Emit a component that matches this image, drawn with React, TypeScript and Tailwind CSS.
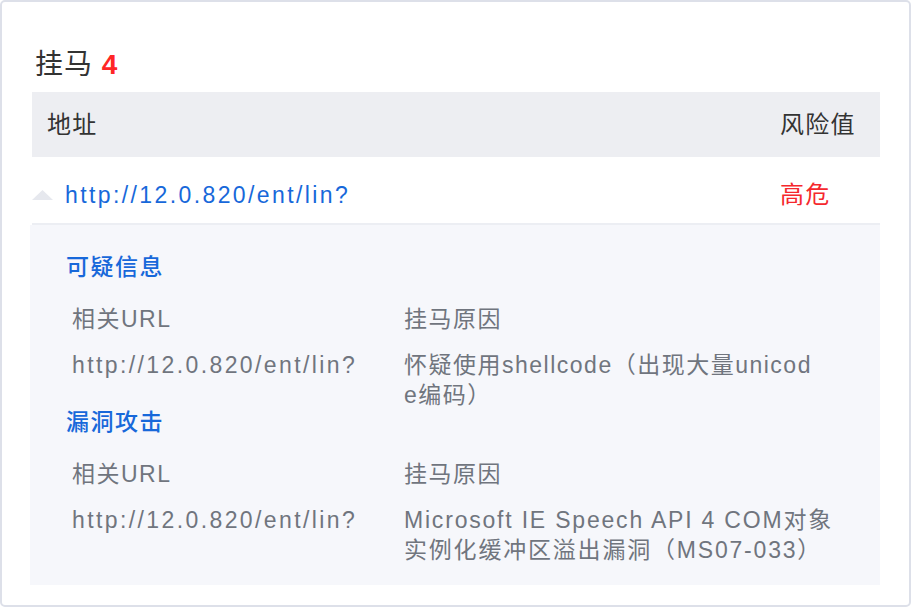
import React from 'react';

type Detail = {
  title: string;
  url: string;
  reason: string[];
  spacing: string;
};

const details: Detail[] = [
  {
    title: '可疑信息',
    url: 'http://12.0.820/ent/lin?',
    reason: ['怀疑使用shellcode（出现大量unicod', 'e编码）'],
    spacing: 'tracking-[1.5px]',
  },
  {
    title: '漏洞攻击',
    url: 'http://12.0.820/ent/lin?',
    reason: ['Microsoft IE Speech API 4 COM对象', '实例化缓冲区溢出漏洞（MS07-033）'],
    spacing: 'tracking-[1.8px]',
  },
];

const font = { fontFamily: '"Liberation Sans", "Noto Sans CJK SC", sans-serif' };

const DetailBlock: React.FC<{ item: Detail; last?: boolean }> = ({ item, last }) => (
  <div>
    <div className="h-[30px] leading-[30px] text-[23px] font-medium text-[#1768da] tracking-[1.5px]">
      {item.title}
    </div>
    <div className="ml-[6px] mt-[22px] grid grid-cols-[332px_1fr] text-[23px] leading-[30px] text-[#70757e]">
      <div className="tracking-[1.5px]">相关URL</div>
      <div className="tracking-[1.5px]">挂马原因</div>
    </div>
    <div
      className={`ml-[6px] mt-[16px] grid grid-cols-[332px_1fr] text-[23px] leading-[30px] text-[#70757e] ${
        last ? '' : 'h-[57px]'
      }`}
    >
      <div className="whitespace-nowrap tracking-[2.4px]">{item.url}</div>
      <div className={`whitespace-nowrap ${item.spacing}`}>
        {item.reason[0]}
        <br />
        {item.reason[1]}
      </div>
    </div>
  </div>
);

export default function App() {
  return (
    <div className="w-[912px] h-[608px] bg-white" style={font}>
      <div className="w-[911px] h-[607px] border-2 border-[#dde0e9] rounded-[5px] bg-white pt-[45px] pl-[30px] pr-[29px]">
        <div className="pl-[3px] h-[36px] leading-[36px] text-[28px] text-[#333333] tracking-[1px]">
          挂马 <span className="font-bold text-[#ff2626]">4</span>
        </div>

        <div className="mt-[9px]">
          {/* table head */}
          <div className="h-[65px] flex items-center bg-[#edeef2] text-[24px] text-[#333333] tracking-[1.2px]">
            <div className="flex-1 pl-[15px]">地址</div>
            <div className="w-[100px]">风险值</div>
          </div>

          {/* row */}
          <div className="h-[68px] pt-[10px] flex items-center border-b-2 border-[#eceef3]">
            <div className="flex-1 flex items-center">
              <svg width="21" height="10" viewBox="0 0 21 10" className="shrink-0">
                <polygon points="10.5,0 21,10 0,10" fill="#e6e8ee" />
              </svg>
              <span className="ml-[12px] text-[23px] text-[#1768da] tracking-[2.4px]">
                http://12.0.820/ent/lin?
              </span>
            </div>
            <div className="w-[100px] text-[24px] text-[#f5282d] tracking-[1.2px]">高危</div>
          </div>

          {/* expanded detail */}
          <div className="-ml-[2px] bg-[#f6f7fb] pt-[27px] pb-[20px] pl-[36px]">
            {details.map((d, i) => (
              <DetailBlock key={i} item={d} last={i === details.length - 1} />
            ))}
          </div>
        </div>
      </div>
    </div>
  );
}
